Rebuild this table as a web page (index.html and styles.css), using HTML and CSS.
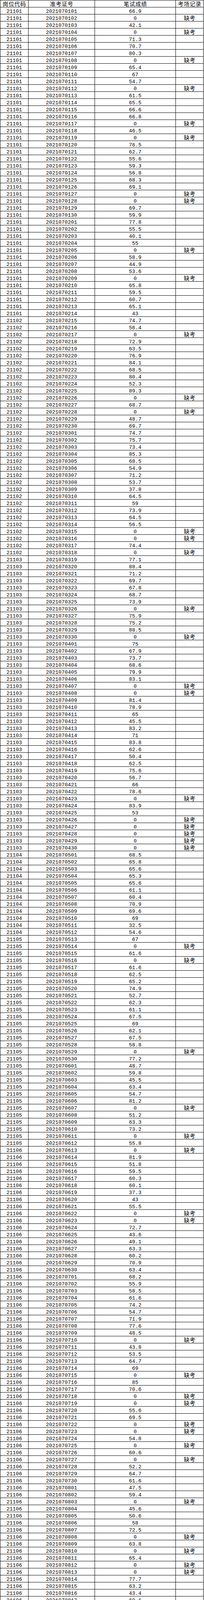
FILE: index.html
```html
<!DOCTYPE html>
<html lang="zh-CN">
<head>
<meta charset="utf-8">
<title>笔试成绩</title>
<link rel="stylesheet" href="styles.css">
</head>
<body>
<table class="scores">
  <thead>
    <tr>
      <th class="c1">岗位代码</th>
      <th class="c2">准考证号</th>
      <th class="c3">笔试成绩</th>
      <th class="c4">考场记录</th>
    </tr>
  </thead>
  <tbody id="rows"></tbody>
</table>
<script src="script.js"></script>
</body>
</html>
```

FILE: styles.css
```css
html, body {
  margin: 0;
  padding: 0;
  background: #fff;
}

.scores {
  border-collapse: separate;
  border-spacing: 0;
  table-layout: fixed;
  width: 521px;
  box-sizing: border-box;
  border-left: 1px solid #000;
  border-top: 1px solid #000;
  color: #000;
}

.scores tr {
  height: 18px;
}

.scores th,
.scores td {
  box-sizing: border-box;
  padding: 0;
  border-right: 1px solid #000;
  border-bottom: 1px solid #000;
  text-align: center;
  vertical-align: top;
  font-weight: normal;
  white-space: nowrap;
}

.c1 { width: 72px; }
.c2 { width: 170px; }
.c3 { width: 207px; }
.c4 { width: 71px; }

.scores th,
.scores td.mark {
  font-family: "Noto Sans CJK SC", "Noto Sans CJK JP", sans-serif;
  font-size: 14px;
  letter-spacing: 1px;
  padding-left: 1px;
  line-height: 17px;
}

.scores td.num {
  font-family: "Liberation Mono", "DejaVu Sans Mono", monospace;
  font-size: 13px;
  letter-spacing: 0.2px;
  line-height: 12px;
  padding-top: 5px;
}

.scores tbody tr:last-child td.num {
  padding-top: 3px;
}

.scores tbody tr:last-child td.mark {
  line-height: 13px;
}
```

FILE: script.js
```js
(function () {
  var rooms = [
    "66.9 0 42.1 0 71.3 70.7 80.3 0 65.4 67 54.7 0 61.5 65.5 66.6 66.8 0 46.5 0 76.5 62.7 55.6 59.3 56.8 68.3 69.1 0 0 69.7 59.9",
    "77.8 55.5 40.1 55 0 58.9 44.9 53.6 0 65.8 59.5 60.7 65.1 43 74.7 56.4 0 72.9 63.5 76.9 84.1 68.5 80.4 52.3 89.3 0 68.7 0 48.7 69.7",
    "74.7 75.7 73.4 85.3 68.5 54.9 71.2 53.7 37.8 64.5 59 73.9 64.5 56.5 0 0 74.4 0 77.1 88.4 71.2 69.7 67.8 68.7 73.9 0 75.9 75.2 88.5 0",
    "75 67.9 73.7 68.6 79.9 83.1 0 0 81.4 78.9 65 45.5 83.2 71 83.8 62.6 50.4 62.5 75.6 56.7 66 78.6 0 83.9 53 0 0 0 0 0",
    "68.5 65.8 65.6 65.3 65.6 61.1 60.4 70.9 69.6 69 32.5 54.6 67 0 61.6 0 61.6 62.5 65.2 74.9 52.7 62.3 61.1 67.5 69 62.1 67.5 58.8 0 77.2",
    "48.7 59.8 45.5 63.4 54.7 81.2 0 51.2 63.3 73.2 0 55.8 0 81.9 51.8 59.5 60.3 60.1 37.3 43 55.5 0 0 72.7 43.6 49.1 63.3 60.2 70.9 63.4",
    "68.2 55.9 58.5 61.6 74.2 54.7 71.9 77.6 48.5 0 43.8 53.5 64.7 69 0 85 70.6 0 0 55.6 69.5 0 0 54.8 0 60.6 0 52.2 64.7 61.6",
    "47.5 59.4 0 45.6 50.6 58 72.5 0 63.8 0 65.4 0 0 77.7 63.2 43.4 60.1 55.9 65.6 54.1 54.3 39.4 0 56.9 53.7 47.1 77.7 67.2 60 69.3",
    "72.8 34 62.5 63.8 68.4 80.8 70.8 85.2 81.5 57.1 55.3 56.7 82.5 68.7 0 61.7 71.2 87.3 0 0 62.4 74.5 57.8 63 66.1 59.8 65.4 53.5 73.9 62.4",
    "62.5 62.1 40.7 0 75.5 72.9 0 55.7 50.3 63 59.9 64.2 0 61.7 66.8 69.5 0 54.5 0 54.5 51.4 70.3 74.7 53.9 59.4 83.2 68.2 0 60 61.1",
    "35.2 0 70.5 70.3 80 55.4 61.6 58.7 54.5 0 85.2 68.8 54.5 68.7 62.5 60.1 58.4 66.2 0 63.5 57.9 61.2 70.4 55.8 0 64.6 59.3 62.8 68.1 56.7",
    "61.4 0 66.3 58.2 63.9 70.1 0 54.8 62.7 59.6 67.4 0 60.5 65.2 57.3 0 63.1 68.9 55.4 61.8 0 64.3 58.6 66.7 0 62.2 59.1 63.6 0 57.5",
    "64.8 60.2 0 58.9 66.5 61.3 0 63.7 57.2 65.9 0 59.8 62.4 0 68.3 56.1 61.9 0 64.1 58.3 0 66.9 60.7 63.2 0 57.8 62.9 0 59.4 65.6",
    "62.3 0 58.7 64.9 0 61.5 57.6 0 63.8 59.2 0 60.9 0 66.4 66 0 71.9 60.2 0 55.6 0"
  ];
  var codes = [
    ["21101", 44], ["21102", 34], ["21103", 42], ["21104", 12],
    ["21105", 30], ["21106", 74], ["21107", 78], ["21108", 30],
    ["21109", 30], ["21110", 31], ["21111", 6]
  ];
  var codeList = [];
  codes.forEach(function (c) {
    for (var i = 0; i < c[1]; i++) codeList.push(c[0]);
  });
  var tbody = document.getElementById("rows");
  var frag = document.createDocumentFragment();
  var idx = 0;
  function pad(n) { return (n < 10 ? "0" : "") + n; }
  function cell(tr, text, cls) {
    var td = document.createElement("td");
    td.className = cls;
    td.textContent = text;
    tr.appendChild(td);
  }
  rooms.forEach(function (room, r) {
    room.split(" ").forEach(function (score, s) {
      var tr = document.createElement("tr");
      cell(tr, codeList[idx] || "", "num");
      cell(tr, "202107" + pad(r + 1) + pad(s + 1), "num");
      cell(tr, score, "num");
      cell(tr, score === "0" ? "缺考" : "", "mark");
      frag.appendChild(tr);
      idx++;
    });
  });
  tbody.appendChild(frag);
})();
```
